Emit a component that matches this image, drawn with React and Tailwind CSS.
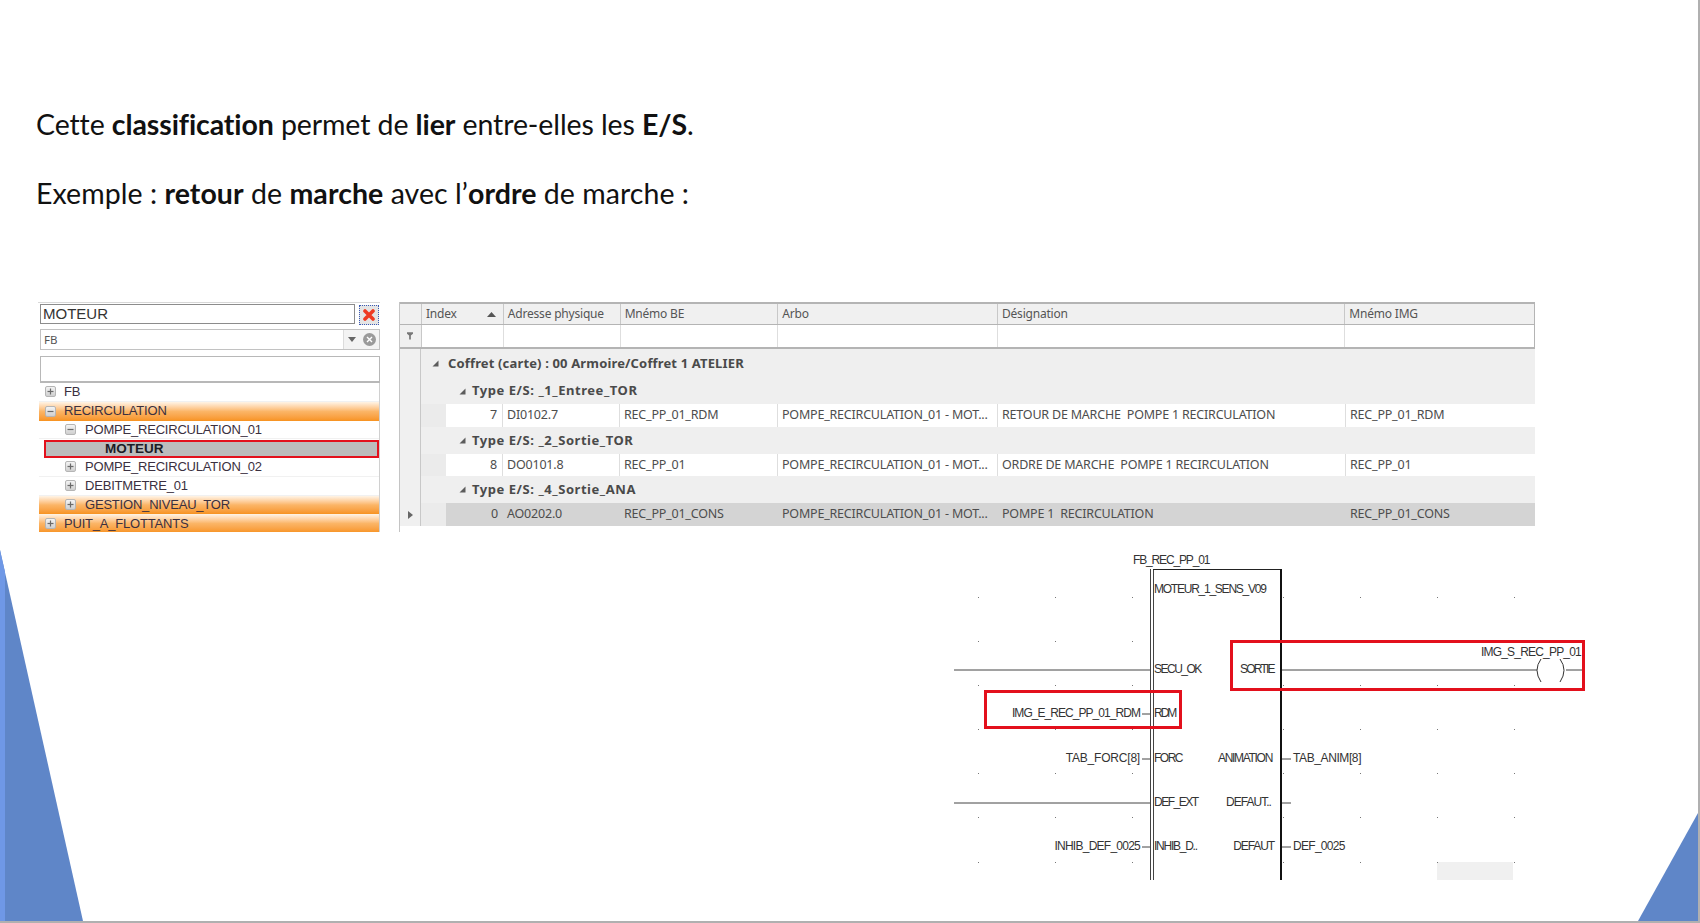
const treeRows = [
  { label: "FB", level: 0, icon: "plus" },
  { label: "RECIRCULATION", level: 0, icon: "minus", orange: true },
  { label: "POMPE_RECIRCULATION_01", level: 1, icon: "minus" },
  { label: "MOTEUR", selected: true },
  { label: "POMPE_RECIRCULATION_02", level: 1, icon: "plus" },
  { label: "DEBITMETRE_01", level: 1, icon: "plus" },
  { label: "GESTION_NIVEAU_TOR", level: 1, icon: "plus", orange: true },
  { label: "PUIT_A_FLOTTANTS", level: 0, icon: "plus", orange: true },
]

const columns = ["w-[82px]", "w-[117px]", "w-[158px]", "w-[220px]", "w-[348px]", "w-[189px]"]
const headers = ["Index", "Adresse physique", "Mnémo BE", "Arbo", "Désignation", "Mnémo IMG"]
const arbo = "POMPE_RECIRCULATION_01 - MOT..."

const gridRows = [
  { type: "group", label: "Coffret (carte) : 00 Armoire/Coffret 1 ATELIER", h: "h-[29px]", top: true },
  { type: "group", label: "Type E/S: _1_Entree_TOR", h: "h-[26px]" },
  { type: "row", h: "h-[23px]", cells: ["7", "DI0102.7", "REC_PP_01_RDM", arbo, "RETOUR DE MARCHE  POMPE 1 RECIRCULATION", "REC_PP_01_RDM"] },
  { type: "group", label: "Type E/S: _2_Sortie_TOR", h: "h-[27px]" },
  { type: "row", h: "h-[22px]", cells: ["8", "DO0101.8", "REC_PP_01", arbo, "ORDRE DE MARCHE  POMPE 1 RECIRCULATION", "REC_PP_01"] },
  { type: "group", label: "Type E/S: _4_Sortie_ANA", h: "h-[27px]" },
  { type: "row", selected: true, h: "h-[23px]", cells: ["0", "AO0202.0", "REC_PP_01_CONS", arbo, "POMPE 1  RECIRCULATION", "REC_PP_01_CONS"] },
]

const labels = [
  { text: "FB_REC_PP_01", cls: "left-[1133px] top-[3px] tracking-[-1.15px]" },
  { text: "MOTEUR_1_SENS_V09", cls: "left-[1154px] top-[32px] tracking-[-1.24px]" },
  { text: "SECU_OK", cls: "left-[1154px] top-[112px] tracking-[-1.5px]" },
  { text: "SORTIE", cls: "left-[1240px] top-[112px] tracking-[-1.8px]" },
  { text: "IMG_S_REC_PP_01", cls: "right-[117px] top-[95px] tracking-[-0.8px]" },
  { text: "IMG_E_REC_PP_01_RDM", cls: "right-[558px] top-[156px] tracking-[-0.95px]" },
  { text: "RDM", cls: "left-[1154px] top-[156px] tracking-[-2px]" },
  { text: "TAB_FORC[8]", cls: "right-[558px] top-[201px] tracking-[-0.2px]" },
  { text: "FORC", cls: "left-[1154px] top-[201px] tracking-[-1.5px]" },
  { text: "ANIMATION", cls: "right-[426px] top-[201px] tracking-[-1.3px]" },
  { text: "TAB_ANIM[8]", cls: "left-[1293px] top-[201px] tracking-[-0.4px]" },
  { text: "DEF_EXT", cls: "left-[1154px] top-[245px] tracking-[-1.5px]" },
  { text: "DEFAUT..", cls: "right-[427px] top-[245px] tracking-[-0.95px]" },
  { text: "INHIB_DEF_0025", cls: "right-[558px] top-[289px] tracking-[-0.75px]" },
  { text: "INHIB_D..", cls: "left-[1154px] top-[289px] tracking-[-1.25px]" },
  { text: "DEFAUT", cls: "right-[424px] top-[289px] tracking-[-1.1px]" },
  { text: "DEF_0025", cls: "left-[1293px] top-[289px] tracking-[-0.7px]" },
]

const dotX = [978, 1055, 1132, 1283, 1360, 1437, 1514]
const dotY = [47, 91, 135, 179, 223, 267, 312]

function TreeIcon({ kind }) {
  return (
    <span className="flex w-[11px] h-[11px] shrink-0 items-center justify-center rounded-[2px] border border-[#b5b5b5] bg-gradient-to-b from-[#f4f4f4] to-[#cfcfcf]">
      <svg width="7" height="7" viewBox="0 0 7 7">
        <path d="M0.5 3.5H6.5" stroke="#6b6b6b" strokeWidth="1.2" />
        {kind === "plus" && <path d="M3.5 0.5V6.5" stroke="#6b6b6b" strokeWidth="1.2" />}
      </svg>
    </span>
  )
}

function TreeRow({ row }) {
  if (row.selected) {
    return (
      <div className="h-[18.75px] flex items-center pl-[5px]">
        <div className="h-[18px] flex-1 flex items-center pl-[59px] border-2 border-[#e3101c] bg-[#bcbcbc] text-[13.5px] font-bold text-[#1c1c26]">
          {row.label}
        </div>
      </div>
    )
  }
  return (
    <div
      className={`h-[18.75px] flex items-center text-[13px] text-[#3b3040] ${row.level === 1 ? "pl-[26px] gap-[9px]" : "pl-[6px] gap-[8px]"} ${
        row.orange ? "bg-gradient-to-b from-[#fff4e6] via-[#fbb566] to-[#f7931e]" : "border-b border-[#f1f1f1]"
      }`}
    >
      <TreeIcon kind={row.icon} />
      <span className="tracking-[-0.2px]">{row.label}</span>
    </div>
  )
}

function ExpandArrow() {
  return (
    <svg width="7" height="7" viewBox="0 0 7 7" className="shrink-0">
      <path d="M6.5 0.5V6.5H0.5Z" fill="#5c5c5c" />
    </svg>
  )
}

function GridRow({ row }) {
  if (row.type === "group") {
    return (
      <div className={`${row.h} flex items-center bg-[#efefef] ${row.top ? "pl-[11px] gap-[9px]" : "pl-[38px] gap-[6px]"}`}>
        <ExpandArrow />
        <span className={`text-[13px] font-bold text-[#4a4a4a] ${row.top ? "tracking-[0.15px]" : "tracking-[0.55px]"}`}>{row.label}</span>
      </div>
    )
  }
  return (
    <div className={`${row.h} flex ${row.selected ? "bg-[#d4d4d4]" : "bg-white"}`}>
      <div className="w-[25px] bg-[#ebebeb]" />
      {row.cells.map((cell, i) => (
        <div
          key={i}
          className={`${i === 0 ? "w-[57px] justify-end pr-[5px]" : columns[i]} flex items-center overflow-hidden whitespace-pre pl-[4px] text-[12.5px] tracking-[-0.2px] text-[#4d4d4d] ${
            i < 5 && !row.selected ? "border-r border-[#dedede]" : ""
          }`}
        >
          {cell}
        </div>
      ))}
    </div>
  )
}

export default function App() {
  return (
    <div className="relative w-full h-[923px] overflow-hidden bg-white border-b-2 border-r-2 border-[#b0b0b0] font-['Noto_Sans',sans-serif]">
      <svg className="absolute inset-0" width="1700" height="923">
        <path d="M0 550L83 921H0Z" fill="#5f86c8" />
        <path d="M0 550L5 572V921H0Z" fill="#6f98e6" />
        <path d="M1638 921L1698 813V921Z" fill="#5f86c8" />
      </svg>

      <div className="relative">
        <div className="pl-9 pt-[90px] font-['Lato',sans-serif] text-[28.5px] leading-[69px] text-[#111] [font-variant-ligatures:none]">
          <p className="h-[69px] tracking-[-0.1px]">
            Cette <b>classification</b> permet de <b>lier</b> entre-elles les <b>E/S</b>.
          </p>
          <p className="h-[69px] tracking-[0.05px]">
            Exemple : <b>retour</b> de <b>marche</b> avec l’<b>ordre</b> de marche :
          </p>
        </div>

        <div className="flex items-start pl-[38px] mt-[74px]">
          {/* arbre de gauche */}
          <div className="w-[342px] h-[230px] overflow-hidden border-t border-[#d8d8d8] pt-[1px] pl-[1px] flex flex-col">
            <div className="flex gap-[4px] pl-[1px]">
              <div className="w-[315px] h-[20px] flex items-center pl-[2px] border border-[#8c8c8c] text-[15px] font-['Liberation_Sans',sans-serif] text-[#333]">
                MOTEUR
              </div>
              <div className="w-[20px] h-[20px] mt-[1px] flex items-center justify-center border border-dotted border-[#3b5bb5] bg-[#e4e4e4]">
                <svg width="12" height="12" viewBox="0 0 12 12">
                  <path d="M2 2L10 10M10 2L2 10" stroke="#ee3a22" strokeWidth="3.6" strokeLinecap="round" />
                </svg>
              </div>
            </div>
            <div className="h-[21px] shrink-0 ml-[1px] mt-[4px] flex items-center border border-[#c2c2c2] text-[11.5px] text-[#555]">
              <span className="flex-1 pl-[3px]">FB</span>
              <div className="w-[36px] h-full flex items-center justify-center gap-[7px] border-l border-[#dcdcdc] bg-[#f3f3f3]">
                <svg width="8" height="5" viewBox="0 0 8 5">
                  <path d="M0 0H8L4 5Z" fill="#666" />
                </svg>
                <span className="flex w-[13px] h-[13px] items-center justify-center rounded-full bg-[#9a9a9a]">
                  <svg width="7" height="7" viewBox="0 0 7 7">
                    <path d="M1 1L6 6M6 1L1 6" stroke="#fff" strokeWidth="1.4" />
                  </svg>
                </span>
              </div>
            </div>
            <div className="h-[27px] shrink-0 ml-[1px] mt-[6px] border border-b-2 border-[#b8b8b8] bg-white" />
            <div className="flex-1 border-r border-[#d0d0d0] font-['Liberation_Sans',sans-serif]">
              {treeRows.map((row) => (
                <TreeRow key={row.label + (row.selected ? "-sel" : "")} row={row} />
              ))}
            </div>
          </div>

          {/* grille */}
          <div className="ml-[19px] w-[1136px] h-[230px] border-l border-[#c4c4c4]">
            <div className="flex h-[23px] border-t-2 border-b border-r border-[#b4b4b4] bg-[#f0f0f0] text-[12px] tracking-[-0.2px] text-[#555]">
              <div className="w-[22px] border-r border-[#c8c8c8]" />
              {headers.map((h, i) => (
                <div key={h} className={`${columns[i]} flex items-center justify-between pl-[4px] ${i === 0 ? "pr-[7px]" : "pr-[10px]"} ${i < 5 ? "border-r border-[#c8c8c8]" : ""}`}>
                  {h}
                  {i === 0 && (
                    <svg width="9" height="5" viewBox="0 0 9 5">
                      <path d="M0 5H9L4.5 0Z" fill="#555" />
                    </svg>
                  )}
                </div>
              ))}
            </div>
            <div className="flex h-[24px] border-b-2 border-r border-[#b4b4b4] bg-white">
              <div className="w-[22px] flex items-center justify-center border-r border-[#c8c8c8] bg-[#f0f0f0]">
                <svg width="6" height="8" viewBox="0 0 7 9">
                  <path d="M0 0H7V2L4.5 4V8.5H2.5V4L0 2Z" fill="#777" />
                </svg>
              </div>
              {columns.map((c, i) => (
                <div key={c} className={`${c} ${i < 5 ? "border-r border-[#dedede]" : ""}`} />
              ))}
            </div>
            <div className="flex">
              <div className="w-[22px] flex flex-col justify-end border-r border-[#c8c8c8] bg-[#f0f0f0]">
                <div className="h-[23px] flex items-center justify-center">
                  <svg width="5" height="8" viewBox="0 0 5 8">
                    <path d="M0 0L5 4L0 8Z" fill="#666" />
                  </svg>
                </div>
              </div>
              <div className="flex-1">
                {gridRows.map((row, i) => (
                  <GridRow key={i} row={row} />
                ))}
              </div>
            </div>
          </div>
        </div>

        {/* schema FBD */}
        <div className="relative h-[340px] mt-[18px] font-['Liberation_Sans',sans-serif] text-[12px] leading-[14px] text-[#333] whitespace-nowrap">
          <div className="absolute left-[1437px] top-[312px] w-[76px] h-[18px] bg-[#f0f0f0]" />
          <svg className="absolute inset-0" width="1700" height="340">
            {dotY.map((y) =>
              dotX.map((x) => <rect key={x + "-" + y} x={x} y={y} width="1" height="1" fill="#777" />)
            )}
            <path d="M1150.5 19V330M1153.5 19V330" stroke="#444" strokeWidth="1" fill="none" />
            <path d="M1153 19.5H1281" stroke="#222" strokeWidth="1.2" />
            <path d="M1281 19V330" stroke="#111" strokeWidth="2" />
            <path d="M954 120H1150M954 253H1150" stroke="#444" strokeWidth="1" />
            <path d="M1142 164H1150M1142 209H1150M1142 297H1150" stroke="#444" strokeWidth="1" />
            <path d="M1282 120H1537M1566 120H1584" stroke="#444" strokeWidth="1" />
            <path d="M1282 209H1291M1282 253H1291M1282 297H1291" stroke="#444" strokeWidth="1" />
            <path d="M1541 109 Q1533 120 1541 132" fill="none" stroke="#333" strokeWidth="1" />
            <path d="M1560 109 Q1568 120 1560 132" fill="none" stroke="#333" strokeWidth="1" />
            <rect x="985.5" y="141.5" width="195" height="36" fill="none" stroke="#e3101c" strokeWidth="3" />
            <rect x="1231.5" y="91.5" width="352" height="48" fill="none" stroke="#e3101c" strokeWidth="3" />
          </svg>
          {labels.map((l) => (
            <span key={l.text} className={`absolute ${l.cls}`}>
              {l.text}
            </span>
          ))}
        </div>
      </div>
    </div>
  )
}
